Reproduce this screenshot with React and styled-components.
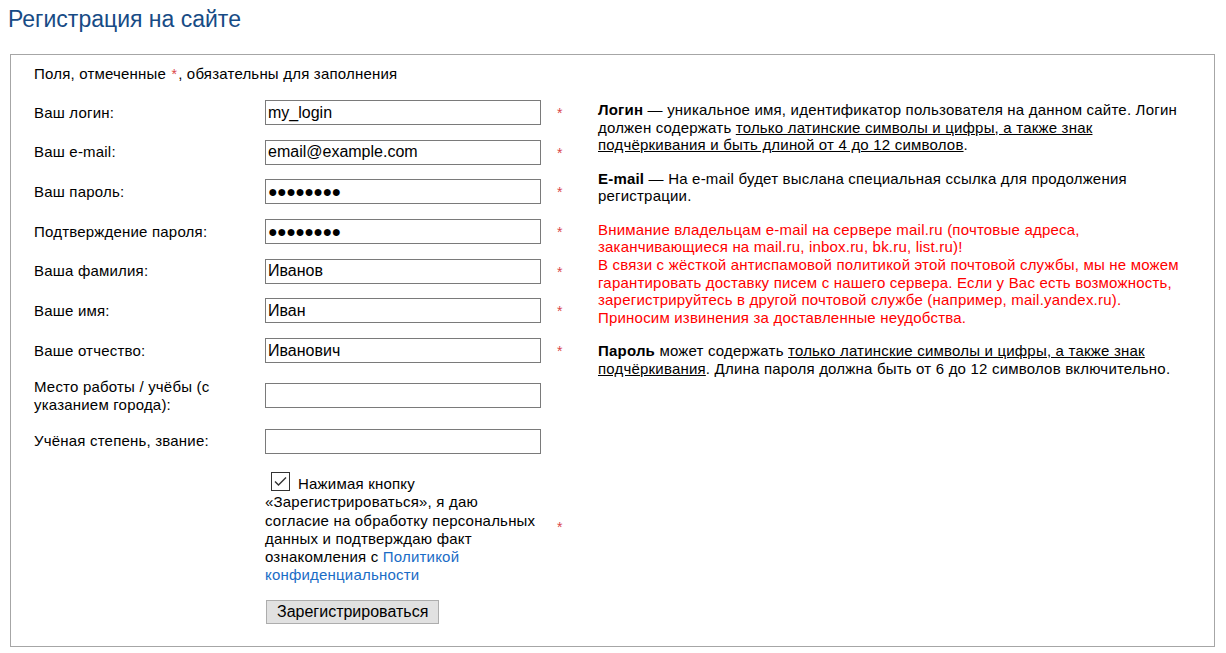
import React from 'react';
import styled, { createGlobalStyle } from 'styled-components';

const GlobalStyle = createGlobalStyle`
  body {
    margin: 0;
    background: #fff;
    color: #000;
    font-family: "Liberation Sans", Arial, sans-serif;
    font-size: 15px;
    letter-spacing: 0.2px;
  }
`;

const Page = styled.div`
  padding: 6px 11px 8px 8px;
`;

const Title = styled.h1`
  margin: 0 0 21px;
  font-size: 23px;
  font-weight: normal;
  letter-spacing: 0;
  color: #174b85;
`;

const Box = styled.div`
  margin-left: 2px;
  border: 1px solid #a6a6a6;
  padding: 10px 23px 22px;
`;

const Note = styled.div`
  margin-bottom: 18px;
`;

const Body = styled.div`
  display: flex;
  align-items: flex-start;
`;

const Form = styled.div`
  width: 564px;
  flex: none;
  display: grid;
  grid-template-columns: 231px 276px 1fr;
  row-gap: 14.7px;
  align-items: center;
`;

const Label = styled.div`
  line-height: 18px;
  padding-right: 14px;
`;

const Input = styled.input`
  box-sizing: border-box;
  width: 276px;
  height: 25px;
  margin: 0;
  padding: 1px 2px;
  border: 1px solid #7a7a7a;
  border-radius: 0;
  font-family: "Liberation Sans", Arial, sans-serif;
  font-size: 16px;
  letter-spacing: ${({ masked }) => (masked ? '-0.6px' : '0')};
  color: #000;
  outline: none;
`;

const Star = styled.span`
  padding-left: 16px;
  color: #d9464a;
  font-size: 14px;
  line-height: 1;
  ${({ inline }) => inline && 'padding: 0 1px;'}
`;

const Consent = styled.div`
  line-height: 18.2px;
  margin-top: 4px;
`;

const CheckBox = styled.span`
  display: inline-block;
  box-sizing: border-box;
  width: 19px;
  height: 19px;
  margin: 0 8px 0 6px;
  border: 1px solid #333;
  vertical-align: -2px;
  svg {
    display: block;
  }
`;

const PolicyLink = styled.a`
  color: #1a6cc6;
  text-decoration: none;
`;

const Button = styled.button`
  justify-self: start;
  margin: 1px 0 0 1px;
  height: 24px;
  padding: 0 10px;
  background: #e1e1e1;
  border: 1px solid #adadad;
  border-radius: 0;
  font-family: "Liberation Sans", Arial, sans-serif;
  font-size: 16px;
  color: #000;
`;

const Info = styled.div`
  flex: 1;
  margin-top: 1px;
  line-height: 17.7px;
  white-space: nowrap;
`;

const Para = styled.p`
  margin: 0 0 15.5px;
  color: ${({ warn }) => (warn ? '#f00' : '#000')};
`;

const Under = styled.span`
  text-decoration: underline;
`;

const dots = '●●●●●●●●';

const fields = [
  { label: 'Ваш логин:', value: 'my_login', req: true },
  { label: 'Ваш e-mail:', value: 'email@example.com', req: true },
  { label: 'Ваш пароль:', value: dots, masked: true, req: true },
  { label: 'Подтверждение пароля:', value: dots, masked: true, req: true },
  { label: 'Ваша фамилия:', value: 'Иванов', req: true },
  { label: 'Ваше имя:', value: 'Иван', req: true },
  { label: 'Ваше отчество:', value: 'Иванович', req: true },
  { label: 'Место работы / учёбы (с указанием города):', value: '' },
  { label: 'Учёная степень, звание:', value: '' },
];

function App() {
  return (
    <Page>
      <GlobalStyle />
      <Title>Регистрация на сайте</Title>
      <Box>
        <Note>
          Поля, отмеченные <Star inline>*</Star>, обязательны для заполнения
        </Note>
        <Body>
          <Form>
            {fields.map((f) => (
              <React.Fragment key={f.label}>
                <Label>{f.label}</Label>
                <Input type="text" masked={f.masked} defaultValue={f.value} />
                <div>{f.req && <Star>*</Star>}</div>
              </React.Fragment>
            ))}
            <div />
            <Consent>
              <CheckBox>
                <svg width="17" height="17" viewBox="0 0 17 17">
                  <polyline points="3,8.5 6.5,12 14,4.5" fill="none" stroke="#333" strokeWidth="1.4" />
                </svg>
              </CheckBox>
              Нажимая кнопку<br />
              «Зарегистрироваться», я даю<br />
              согласие на обработку персональных<br />
              данных и подтверждаю факт<br />
              ознакомления с <PolicyLink href="#">Политикой<br />конфиденциальности</PolicyLink>
            </Consent>
            <div><Star>*</Star></div>
            <div />
            <Button>Зарегистрироваться</Button>
            <div />
          </Form>
          <Info>
            <Para>
              <b>Логин</b> — уникальное имя, идентификатор пользователя на данном сайте. Логин<br />
              должен содержать <Under>только латинские символы и цифры, а также знак<br />
              подчёркивания и быть длиной от 4 до 12 символов</Under>.
            </Para>
            <Para>
              <b>E-mail</b> — На e-mail будет выслана специальная ссылка для продолжения<br />
              регистрации.
            </Para>
            <Para warn>
              Внимание владельцам e-mail на сервере mail.ru (почтовые адреса,<br />
              заканчивающиеся на mail.ru, inbox.ru, bk.ru, list.ru)!<br />
              В связи с жёсткой антиспамовой политикой этой почтовой службы, мы не можем<br />
              гарантировать доставку писем с нашего сервера. Если у Вас есть возможность,<br />
              зарегистрируйтесь в другой почтовой службе (например, mail.yandex.ru).<br />
              Приносим извинения за доставленные неудобства.
            </Para>
            <Para>
              <b>Пароль</b> может содержать <Under>только латинские символы и цифры, а также знак<br />
              подчёркивания</Under>. Длина пароля должна быть от 6 до 12 символов включительно.
            </Para>
          </Info>
        </Body>
      </Box>
    </Page>
  );
}

export default App;
